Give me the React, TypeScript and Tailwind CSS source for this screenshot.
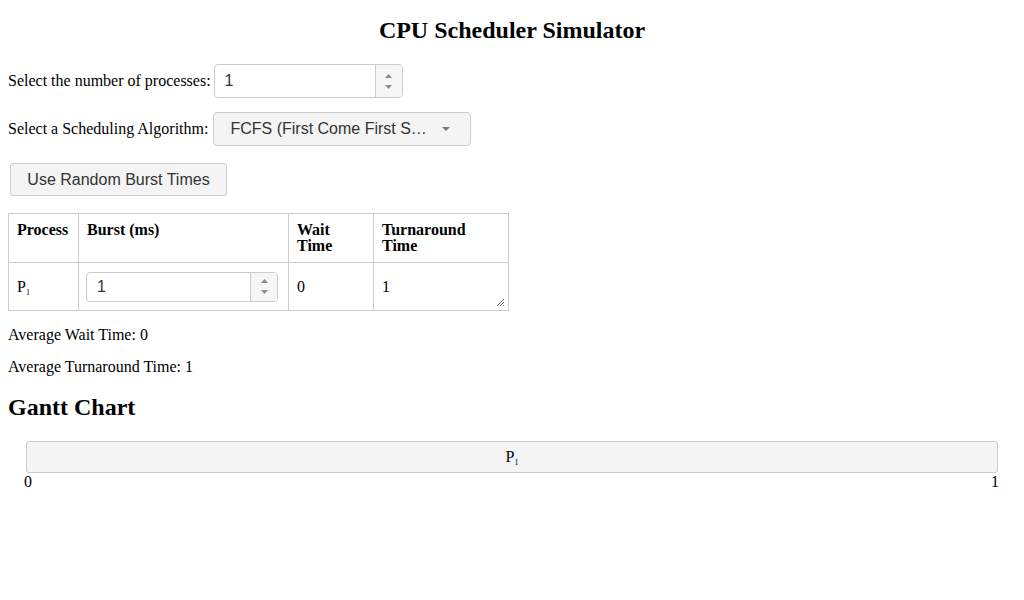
import React from "react";

const serif = "font-['Liberation_Serif','Times_New_Roman',serif]";
const sans = "font-['Liberation_Sans',Arial,sans-serif]";

/* Spinner buttons of a number input */
function Spinner() {
  return (
    <div className="flex w-[27px] shrink-0 flex-col items-center justify-center gap-[7px] border-l border-[#ccc] bg-[#f6f6f6]">
      <svg width="7" height="4" viewBox="0 0 7 4">
        <path d="M3.5 0L7 4H0z" fill="#8a8a8a" />
      </svg>
      <svg width="7" height="4" viewBox="0 0 7 4">
        <path d="M0 0h7L3.5 4z" fill="#8a8a8a" />
      </svg>
    </div>
  );
}

function NumberBox({ value, className }: { value: string; className: string }) {
  return (
    <div className={`flex overflow-hidden rounded-[4px] border border-[#ccc] bg-white ${className}`}>
      <div className={`flex flex-1 items-center pl-[10px] text-[16px] text-[#333] ${sans}`}>{value}</div>
      <Spinner />
    </div>
  );
}

function Sub({ n }: { n: number }) {
  return <sub className="relative -bottom-[3px] text-[8px] leading-none">{n}</sub>;
}

export default function App() {
  return (
    <div className={`min-h-[600px] bg-white px-2 text-[16px] text-black ${serif}`}>
      <h2 className="pt-4 text-center text-[24px] leading-[28px] font-bold">CPU Scheduler Simulator</h2>

      {/* Process count */}
      <div className="mt-5 flex items-center gap-[3px] leading-[18px]">
        <span>Select the number of processes:</span>
        <NumberBox value="1" className="h-[34px] w-[189px]" />
      </div>

      {/* Algorithm */}
      <div className="mt-[14px] flex items-center gap-[5px] leading-[18px]">
        <span>Select a Scheduling Algorithm:</span>
        <button
          className={`flex h-[34px] w-[258px] items-center justify-between rounded-[4px] border border-[#ccc] bg-[#f4f4f4] pr-[20px] pl-[16px] text-[16px] text-[#333] ${sans}`}
        >
          <span>FCFS (First Come First S…</span>
          <svg width="8" height="4" viewBox="0 0 8 4">
            <path d="M0 0h8L4 4z" fill="#777" />
          </svg>
        </button>
      </div>

      <button
        className={`mt-[17px] ml-[2px] h-[33px] w-[217px] rounded-[3px] border border-[#ccc] bg-[#f4f4f4] text-[16px] text-[#333] ${sans}`}
      >
        Use Random Burst Times
      </button>

      {/* Process table */}
      <table className="mt-[17px] border-collapse text-left">
        <thead>
          <tr className="align-top leading-4">
            <th className="w-[70px] border border-[#ccc] px-2 pt-[8px] pb-[8px]">Process</th>
            <th className="w-[210px] border border-[#ccc] px-2 pt-[8px] pb-[8px]">Burst (ms)</th>
            <th className="w-[85px] border border-[#ccc] px-2 pt-[8px] pb-[8px]">
              Wait
              <br />
              Time
            </th>
            <th className="w-[135px] border border-[#ccc] px-2 pt-[8px] pb-[8px]">
              Turnaround
              <br />
              Time
            </th>
          </tr>
        </thead>
        <tbody>
          <tr className="h-[48px]">
            <td className="border border-[#ccc] px-2">
              P<Sub n={1} />
            </td>
            <td className="border border-[#ccc] pr-2 pl-[7px]">
              <NumberBox value="1" className="h-[30px] w-[192px]" />
            </td>
            <td className="border border-[#ccc] px-2">0</td>
            <td className="relative border border-[#ccc] px-2">
              1
              <svg className="absolute right-[4px] bottom-[4px]" width="7" height="7" viewBox="0 0 7 7">
                <path d="M7 0L0 7M7 3L3 7M7 6L6 7" stroke="#777" strokeWidth="1" />
              </svg>
            </td>
          </tr>
        </tbody>
      </table>

      <p className="mt-[15px] leading-[18px]">Average Wait Time: 0</p>
      <p className="mt-[14px] leading-[18px]">Average Turnaround Time: 1</p>

      <h2 className="mt-[17px] text-[24px] leading-[28px] font-bold">Gantt Chart</h2>

      {/* Gantt chart */}
      <div className="mt-[20px] px-[18px]">
        <div className="flex h-[32px] items-center justify-center rounded-[3px] border border-[#ccc] bg-[#f4f4f4]">
          <span>
            P<Sub n={1} />
          </span>
        </div>
        <div className="flex justify-between leading-[18px]">
          <span className="-ml-[2px]">0</span>
          <span className="-mr-[1px]">1</span>
        </div>
      </div>
    </div>
  );
}
